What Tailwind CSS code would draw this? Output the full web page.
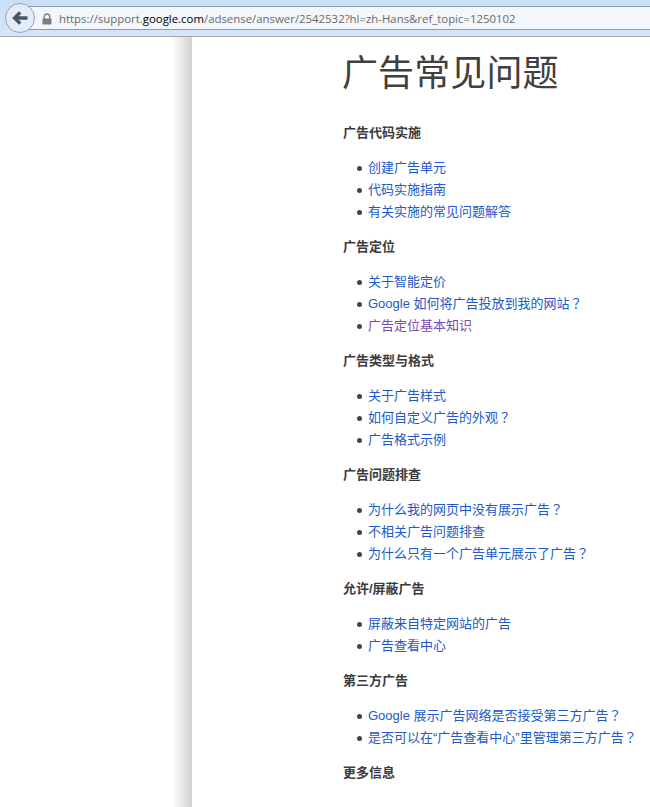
<!DOCTYPE html>
<html lang="zh-Hans">
  <head>
    <meta charset="UTF-8" />
    <title>广告常见问题</title>
    <script src="https://cdn.jsdelivr.net/npm/@tailwindcss/browser@4"></script>
  </head>
  <body class="h-[807px] overflow-hidden bg-white font-['Liberation_Sans','Noto_Sans_CJK_SC',sans-serif]">
    <!-- Browser toolbar -->
    <div class="relative h-[37px] border-b border-[#9fa6ae] bg-[linear-gradient(to_bottom,#cbdef5,#d6e5f8)] pt-[6px]">
      <div class="ml-[18px] flex h-[24px] items-center border-y border-[#8b9bb0] bg-[#f3f7fc] pl-[23px] pt-[1px] font-['Open_Sans','Liberation_Sans',sans-serif] text-[11.4px] text-[#6a6a6a]">
        <svg class="mr-[6px] h-[12px] w-[12px]" viewBox="0 0 12 12">
          <path d="M3.2 6V3.8a2.8 2.8 0 0 1 5.6 0V6" fill="none" stroke="#7d7d80" stroke-width="1.4" />
          <rect x="1.5" y="5.5" width="9" height="6" rx="1" fill="#7d7d80" />
        </svg>
        <span>https://support.<span class="text-black">google.com</span>/adsense/answer/2542532?hl=zh-Hans&amp;ref_topic=1250102</span>
      </div>
      <div class="absolute left-[5px] top-[3px] flex h-[30px] w-[30px] items-center justify-center rounded-full border border-[#8fa3bd] bg-[#e3ecf8]">
        <svg class="h-[18px] w-[18px]" viewBox="0 0 18 18">
          <path d="M16.5 9H4M9.2 3.4 3.6 9l5.6 5.6" fill="none" stroke="#46566c" stroke-width="3.4" />
        </svg>
      </div>
    </div>

    <div class="flex">
      <!-- Left gutter with shadow -->
      <div class="h-[770px] w-[192px] shrink-0 bg-[linear-gradient(to_right,#fff_172px,#d2d2d2_192px)]"></div>

      <main class="pl-[151px] text-[13px] text-[#3c3c3c]">
        <h1 class="-ml-[1px] mt-[14px] h-[45px] text-[36px] leading-[45px] tracking-[0.1px] whitespace-nowrap text-[#404040]">广告常见问题</h1>

        <h3 class="mt-[26px] font-bold leading-[22px]">广告代码实施</h3>
        <ul class="mt-[13px] pl-[14px] leading-[22px] text-[#2159c8] *:flex *:items-center *:before:mr-[6px] *:before:size-[5px] *:before:rounded-full *:before:bg-[#444] *:before:content-['']">
          <li><a>创建广告单元</a></li>
          <li><a>代码实施指南</a></li>
          <li><a>有关实施的常见问题解答</a></li>
        </ul>

        <h3 class="mt-[13px] font-bold leading-[22px]">广告定位</h3>
        <ul class="mt-[13px] pl-[14px] leading-[22px] text-[#2159c8] *:flex *:items-center *:before:mr-[6px] *:before:size-[5px] *:before:rounded-full *:before:bg-[#444] *:before:content-['']">
          <li><a>关于智能定价</a></li>
          <li><a>Google 如何将广告投放到我的网站<span lang="zh-Hant" class="font-['Noto_Sans_CJK_TC'] leading-none">？</span></a></li>
          <li><a class="text-[#7b4aa8]">广告定位基本知识</a></li>
        </ul>

        <h3 class="mt-[13px] font-bold leading-[22px]">广告类型与格式</h3>
        <ul class="mt-[13px] pl-[14px] leading-[22px] text-[#2159c8] *:flex *:items-center *:before:mr-[6px] *:before:size-[5px] *:before:rounded-full *:before:bg-[#444] *:before:content-['']">
          <li><a>关于广告样式</a></li>
          <li><a>如何自定义广告的外观<span lang="zh-Hant" class="font-['Noto_Sans_CJK_TC'] leading-none">？</span></a></li>
          <li><a>广告格式示例</a></li>
        </ul>

        <h3 class="mt-[13px] font-bold leading-[22px]">广告问题排查</h3>
        <ul class="mt-[13px] pl-[14px] leading-[22px] text-[#2159c8] *:flex *:items-center *:before:mr-[6px] *:before:size-[5px] *:before:rounded-full *:before:bg-[#444] *:before:content-['']">
          <li><a>为什么我的网页中没有展示广告<span lang="zh-Hant" class="font-['Noto_Sans_CJK_TC'] leading-none">？</span></a></li>
          <li><a>不相关广告问题排查</a></li>
          <li><a>为什么只有一个广告单元展示了广告<span lang="zh-Hant" class="font-['Noto_Sans_CJK_TC'] leading-none">？</span></a></li>
        </ul>

        <h3 class="mt-[13px] font-bold leading-[22px]">允许/屏蔽广告</h3>
        <ul class="mt-[13px] pl-[14px] leading-[22px] text-[#2159c8] *:flex *:items-center *:before:mr-[6px] *:before:size-[5px] *:before:rounded-full *:before:bg-[#444] *:before:content-['']">
          <li><a>屏蔽来自特定网站的广告</a></li>
          <li><a>广告查看中心</a></li>
        </ul>

        <h3 class="mt-[13px] font-bold leading-[22px]">第三方广告</h3>
        <ul class="mt-[13px] pl-[14px] leading-[22px] text-[#2159c8] *:flex *:items-center *:before:mr-[6px] *:before:size-[5px] *:before:rounded-full *:before:bg-[#444] *:before:content-['']">
          <li><a>Google 展示广告网络是否接受第三方广告<span lang="zh-Hant" class="font-['Noto_Sans_CJK_TC'] leading-none">？</span></a></li>
          <li><a class="whitespace-nowrap">是否可以在“广告查看中心”里管理第三方广告<span lang="zh-Hant" class="font-['Noto_Sans_CJK_TC'] leading-none">？</span></a></li>
        </ul>

        <h3 class="mt-[13px] font-bold leading-[22px]">更多信息</h3>
      </main>
    </div>
  </body>
</html>
